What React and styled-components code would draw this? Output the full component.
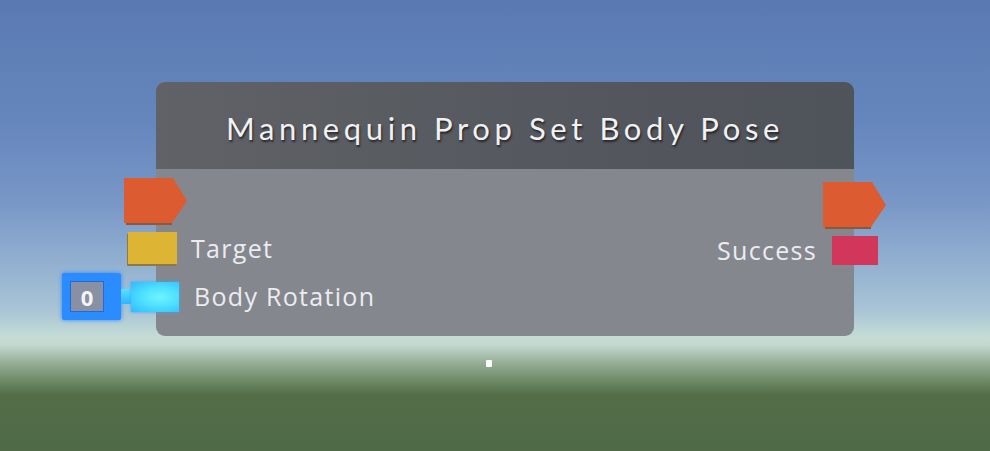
import React from "react"
import styled, { createGlobalStyle } from "styled-components"

const GlobalStyle = createGlobalStyle`
  html, body {
    margin: 0;
    padding: 0;
    overflow: hidden;
  }
`

const Scene = styled.div`
  width: 990px;
  height: 451px;
  position: relative;
  background: linear-gradient(
    to bottom,
    #5a79b3 0px,
    #6586bd 120px,
    #7896c6 200px,
    #90afd0 260px,
    #a9c4d6 310px,
    #c5ddd5 338px,
    #c3d9d0 345px,
    #97b09a 362px,
    #6f8b68 380px,
    #526d48 395px,
    #4f6a46 451px
  );
  padding: 82px 0 0 156px;
  box-sizing: border-box;
  font-family: "Open Sans", "DejaVu Sans", sans-serif;
`

const Node = styled.div`
  width: 698px;
  height: 254px;
  border-radius: 9px;
  background: #85878f;
  display: flex;
  flex-direction: column;
`

const Header = styled.div`
  height: 87px;
  border-radius: 9px 9px 0 0;
  background: linear-gradient(to right, #606267, #54575d 60%, #4f535a);
  display: flex;
  align-items: center;
  justify-content: center;
`

const Title = styled.h1`
  margin: 4px 0 0;
  font-family: "Lato", "Open Sans", sans-serif;
  font-weight: 400;
  font-size: 31px;
  letter-spacing: 4.6px;
  color: #f1f1f1;
  text-shadow: 1px 2px 2px rgba(20, 20, 25, 0.75);
`

const Body = styled.div`
  flex: 1;
  display: flex;
  justify-content: space-between;
`

const Column = styled.div`
  display: flex;
  flex-direction: column;
  align-items: ${(p) => (p.$right ? "flex-end" : "flex-start")};
  padding-top: ${(p) => p.$top}px;
`

const Row = styled.div`
  display: flex;
  align-items: center;
  gap: ${(p) => p.$gap ?? 14}px;
  margin-left: ${(p) => p.$ml || 0}px;
  margin-right: ${(p) => p.$mr || 0}px;
  margin-top: ${(p) => p.$mt || 0}px;
`

const Label = styled.span`
  font-size: 25px;
  color: #ececef;
  line-height: 1;
  letter-spacing: 1.3px;
  margin-left: ${(p) => p.$ml || 0}px;
`

const Pin = styled.div`
  width: ${(p) => p.$w}px;
  height: ${(p) => p.$h}px;
  background: ${(p) => p.$color};
  box-shadow: -1px 2px 0 ${(p) => p.$shade};
`

const CyanPin = styled.div`
  width: 48px;
  height: 30px;
  background: radial-gradient(ellipse at 60% 50%, #6ff4ff 0%, #4ee0ff 45%, #32b8ff 100%);
  box-shadow: 0 0 3px #3aa8ff;
`

const Connector = styled.div`
  width: 10px;
  height: 15px;
  background: linear-gradient(#56e2ff, #33b4ff);
`

const ValueBox = styled.div`
  width: 59px;
  height: 47px;
  box-sizing: border-box;
  padding: 8px 17px 8px 8px;
  background: #2a8cff;
  box-shadow: 0 0 4px #2a8cff;
  border-radius: 2px;
  display: flex;
`

const ValueInner = styled.div`
  flex: 1;
  background: #8a90a4;
  border: 1px solid #2369d8;
  display: flex;
  align-items: center;
  justify-content: center;
  color: #f4f4f6;
  font-weight: 700;
  font-size: 22px;
`

const Crosshair = styled.div`
  position: absolute;
  left: 486px;
  top: 360px;
  width: 6px;
  height: 7px;
  border-radius: 1px;
  background: #ffffff;
`

const ExecPin = () => (
  <svg width="63" height="47" viewBox="0 0 63 47" style={{ display: "block" }}>
    <polygon points="2,3 48,3 48,47 2,47" fill="#8a5a3e" />
    <polygon points="0,0 49,0 63,23 48,45 0,45" fill="#dd5b30" />
  </svg>
)

const App = () => {
  return (
    <>
      <GlobalStyle />
      <Scene>
        <Node>
          <Header>
            <Title>Mannequin Prop Set Body Pose</Title>
          </Header>
          <Body>
            <Column $top={9}>
              <Row $ml={-32}>
                <ExecPin />
              </Row>
              <Row $ml={-28} $mt={7}>
                <Pin $w={49} $h={32} $color="#deb435" $shade="#8d7a45" />
                <Label>Target</Label>
              </Row>
              <Row $ml={-94} $mt={9} $gap={0}>
                <ValueBox>
                  <ValueInner>0</ValueInner>
                </ValueBox>
                <Connector />
                <CyanPin />
                <Label $ml={15}>Body Rotation</Label>
              </Row>
            </Column>
            <Column $right $top={13}>
              <Row $mr={-32}>
                <ExecPin />
              </Row>
              <Row $mr={-24} $mt={7} $gap={15}>
                <Label>Success</Label>
                <Pin $w={46} $h={29} $color="#d2365a" $shade="transparent" />
              </Row>
            </Column>
          </Body>
        </Node>
        <Crosshair />
      </Scene>
    </>
  )
}

export default App
